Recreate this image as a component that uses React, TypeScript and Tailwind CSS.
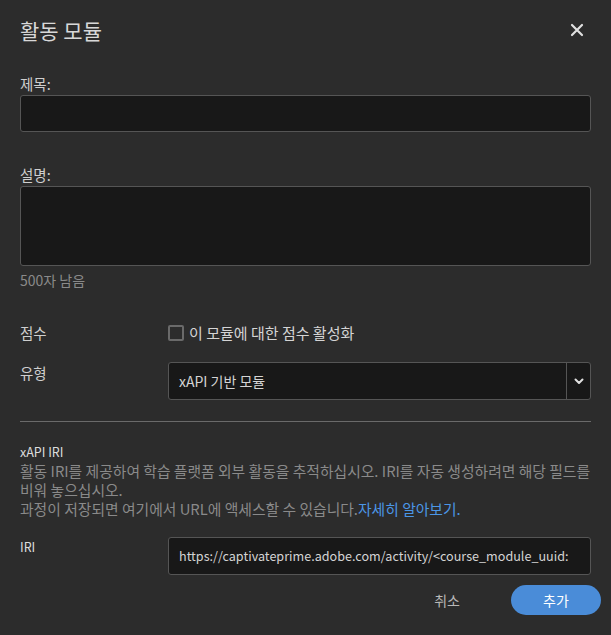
import React from 'react';

const font = { fontFamily: '"Noto Sans CJK KR", "Noto Sans", sans-serif' };

export default function App() {
  return (
    <div style={font} className="w-[611px] h-[635px] bg-[#2c2c2c] text-[#d4d4d4] overflow-hidden">
      <div className="flex flex-col px-5 pt-[15px]">
        {/* HEADER */}
        <div className="flex items-center justify-between h-[30px]">
          <h1 className="text-[21px] leading-[30px] text-[#d8d8d8]">활동 모듈</h1>
          <button className="mr-[7px] text-[#e0e0e0]">
            <svg width="14" height="14" viewBox="0 0 14 14" fill="none">
              <path d="M2 2 L12 12 M12 2 L2 12" stroke="currentColor" strokeWidth="2.2" strokeLinecap="round" />
            </svg>
          </button>
        </div>

        {/* TITLE */}
        <label className="mt-[29px] text-[14.5px] leading-[20px] text-[#cfcfcf]">제목:</label>
        <input className="mt-px h-[37px] w-full rounded-[3px] border border-[#555] bg-[#181818] px-2 text-sm outline-none" />

        {/* DESCRIPTION */}
        <label className="mt-[33px] text-[14.5px] leading-[20px] text-[#cfcfcf]">설명:</label>
        <textarea className="mt-px h-[80px] w-full resize-none rounded-[3px] border border-[#555] bg-[#181818] px-2 text-sm outline-none" />
        <div className="mt-[5px] text-[14px] leading-[18px] text-[#8a8a8a]">500자 남음</div>

        {/* SCORE */}
        <div className="mt-[34px] grid grid-cols-[148px_1fr] items-center">
          <span className="text-[14.5px] leading-[20px] text-[#cfcfcf]">점수</span>
          <label className="flex items-center gap-[5px] text-[15px] leading-[20px] text-[#d4d4d4]">
            <span className="block h-4 w-4 rounded-[2px] border-2 border-[#6a6a6a]" />
            이 모듈에 대한 점수 활성화
          </label>
        </div>

        {/* TYPE */}
        <div className="mt-[19px] grid grid-cols-[148px_1fr] items-start">
          <span className="pt-px text-[14.5px] leading-[20px] text-[#cfcfcf]">유형</span>
          <div className="flex h-[38px] rounded-[3px] border border-[#555] bg-[#181818]">
            <span className="flex-1 pl-[10px] text-[14px] leading-[36px] text-[#d4d4d4]">xAPI 기반 모듈</span>
            <span className="flex w-[24px] items-center justify-center border-l border-[#555] text-[#e0e0e0]">
              <svg width="10" height="7" viewBox="0 0 10 7" fill="none">
                <path d="M1.5 1.5 L5 5 L8.5 1.5" stroke="currentColor" strokeWidth="2" strokeLinecap="round" strokeLinejoin="round" />
              </svg>
            </span>
          </div>
        </div>

        <div className="mt-[21px] h-px w-full bg-[#6a6a6a]" />

        {/* XAPI IRI */}
        <div className="mt-[21px] text-[12.5px] leading-[18px] text-[#dcdcdc]">xAPI IRI</div>
        <div className="text-[14.8px] leading-[19px] text-[#8a8a8a] whitespace-nowrap">
          <div>활동 IRI를 제공하여 학습 플랫폼 외부 활동을 추적하십시오. IRI를 자동 생성하려면 해당 필드를</div>
          <div>비워 놓으십시오.</div>
          <div>
            과정이 저장되면 여기에서 URL에 액세스할 수 있습니다.<span className="text-[#4b96e6]">자세히 알아보기.</span>
          </div>
        </div>

        {/* IRI */}
        <div className="mt-[19px] grid grid-cols-[148px_1fr] items-start">
          <span className="pt-px text-[12.5px] leading-[18px] text-[#dcdcdc]">IRI</span>
          <div className="h-[38px] overflow-hidden whitespace-nowrap rounded-[3px] border border-[#555] bg-[#181818] pl-[10px] text-[12.6px] leading-[36px] text-[#d4d4d4]">
            https://captivateprime.adobe.com/activity/&lt;course_module_uuid:
          </div>
        </div>

        {/* ACTIONS */}
        <div className="mt-[10px] -mr-[10px] flex items-center justify-end">
          <button className="mr-[51px] text-[14px] text-[#b8b8b8]">취소</button>
          <button className="h-[30px] w-[90px] rounded-full bg-[#4a8cd8] text-[14px] text-white">추가</button>
        </div>
      </div>
    </div>
  );
}
